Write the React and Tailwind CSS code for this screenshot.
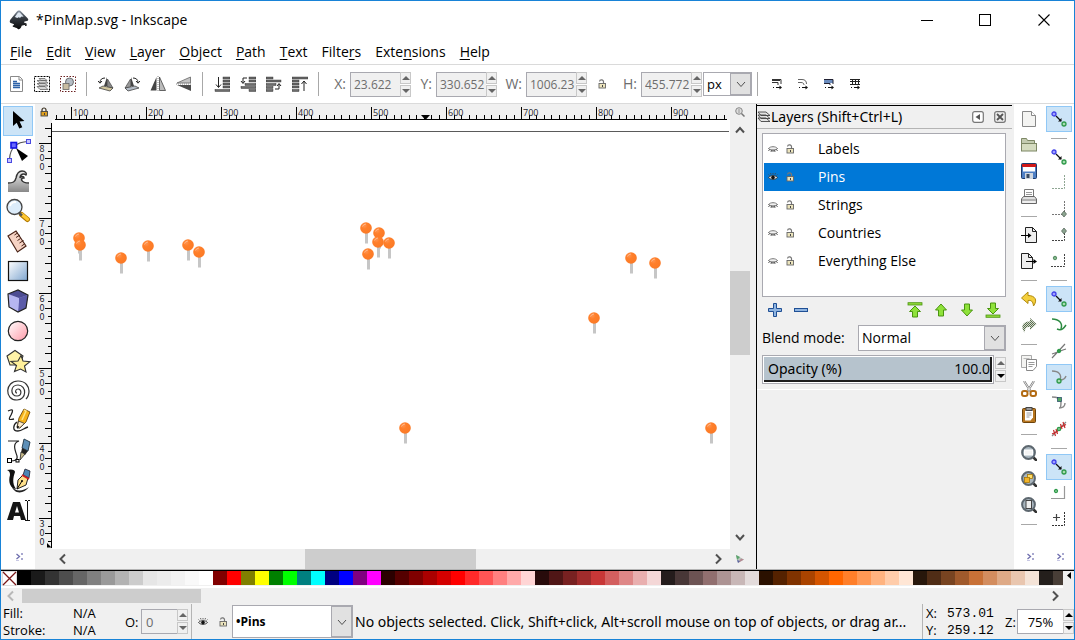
import React from "react";

/* ---------- data ---------- */

const MENUS = ["File", "Edit", "View", "Layer", "Object", "Path", "Text", "Filters", "Extensions", "Help"];
const MENU_KEYS = { Filters: 5, Extensions: 4 };

const LAYERS = [
  { name: "Labels", visible: false },
  { name: "Pins", visible: true, selected: true },
  { name: "Strings", visible: false },
  { name: "Countries", visible: false },
  { name: "Everything Else", visible: false },
];

const PALETTE =
  "000000 1a1a1a 333333 4d4d4d 666666 808080 999999 b3b3b3 cccccc e6e6e6 ececec f2f2f2 f9f9f9 ffffff 800000 ff0000 808000 ffff00 008000 00ff00 008080 00ffff 000080 0000ff 800080 ff00ff 2b0000 550000 800000 aa0000 d40000 ff0000 ff2a2a ff5555 ff8080 ffaaaa ffd5d5 280b0b 501616 782121 a02c2c c83737 d35f5f de8787 e9afaf f4d7d7 241c1c 483737 6c5353 916f6f ac9393 c8b7b7 e3dbdb 2b1100 552200 803300 aa4400 d45500 ff6600 ff7f2a ff9955 ffb380 ffccaa ffe6d5 28170b 502d16 784421 a05a2c c87137 d38d5f deaa87 e9c6af f4e3d7 241f1c 483e37".split(
    " "
  );

/* pin heads, relative to the canvas corner */
const PINS = [
  [27, 118], [28, 125], [69, 138], [96, 126], [136, 125], [147, 132], [314, 108], [327, 113],
  [326, 122], [337, 123], [316, 134], [579, 138], [603, 143], [542, 198], [353, 308], [659, 308],
];

/* ---------- icons ---------- */

function Svg({ s = 16, children, ...rest }) {
  return (
    <svg width={s} height={s} viewBox={`0 0 ${s} ${s}`} fill="none" className="block shrink-0" aria-hidden="true" {...rest}>
      {children}
    </svg>
  );
}

const LogoIcon = () => (
  <Svg s={20}>
    <defs>
      <linearGradient id="lg" x1="0" y1="0" x2="0" y2="1">
        <stop offset="0" stopColor="#8f9aa8" />
        <stop offset=".35" stopColor="#3a4048" />
        <stop offset="1" stopColor="#0a0a0a" />
      </linearGradient>
    </defs>
    <path d="M10 .5c1 0 1.600.5 2.300 1.200l6.300 6.600c1.200 1.300.8 2.400-.8 2.800-1.500.4-2.800.5-2.800 1.200 0 .8 2.900.7 2.900 1.700 0 1.100-3.400 1-4.900 1.600-1 .5-.2 1.400-1.200 2.200-.6.5-1.200 1.400-2 1.400-.9 0-1.300-.8-2.100-1.300-1.100-.6-3.200-.6-4-1.500-.7-.9 1.500-1 1.400-1.900-.1-1-3.500-.9-4.200-2.300-.5-1.300.3-2.400 1.200-3.500L7.700 1.700C8.400 1 9 .5 10 .5z" fill="url(#lg)" />
    <path d="M10 2.200c.6 0 .9.3 1.300.7l3.200 3.500c-.8.700-1.500-.1-2.200.3-.8.5-1.200 1.600-2 .9-.7-.6-1.200-.1-1.900.3-.8.3-1.500-.9-2.600-.8L8.700 2.900c.4-.4.7-.7 1.300-.7z" fill="#dfe8f2" />
    <circle cx="16.800" cy="15.200" r=".9" fill="#222" />
  </Svg>
);

const SelectorIcon = () => (
  <Svg s={26}><path d="M8 3v15l3.700-3.300 2.600 5.800 3-1.300-2.700-5.700 4.800-.4z" fill="#000" /></Svg>
);
const NodeIcon = () => (
  <Svg s={26}>
    <path d="M4.500 21C5 13 8 4 23 3.500" stroke="#555" strokeWidth="1.200" />
    <path d="M11 10l12 8-6 5z" fill="#000" />
    <rect x="6" y="4.500" width="5.500" height="5.500" fill="#6a6aff" stroke="#1414e0" strokeWidth="1.600" />
    <rect x="21.500" y="1.500" width="4" height="4" fill="#c5c5ff" stroke="#4a4ae0" />
    <rect x="2.500" y="20.500" width="4" height="4" fill="#c5c5ff" stroke="#4a4ae0" />
  </Svg>
);
const TweakIcon = () => (
  <Svg s={26}>
    <defs><linearGradient id="tw" x1="0" y1="0" x2="0" y2="1"><stop offset="0" stopColor="#eee" /><stop offset="1" stopColor="#888" /></linearGradient></defs>
    <path d="M3 24v-9c5 0 7-1 8-5 1-5 3-7 6-7 3 0 4 2 4 3-2-1-5 0-5 3 1-1 4-1 4 1-3 0-4 5 4 5.500V24z" fill="url(#tw)" />
    <path d="M3 15c5 0 7-1 8-5 1-5 3-7 6-7 4 0 5 3 4 4-2-2-6-1-6 3 1-2 4-2 4 0-4-.5-4 5 5 5" stroke="#333" strokeWidth="1.400" />
  </Svg>
);
const ZoomToolIcon = () => (
  <Svg s={26}>
    <path d="M16.500 16.500l6 5" stroke="#b07800" strokeWidth="5" strokeLinecap="round" />
    <path d="M17 16.500l5.500 4.700" stroke="#ffc832" strokeWidth="3.400" strokeLinecap="round" />
    <path d="M14 15l3 2.500" stroke="#555" strokeWidth="2.600" />
    <circle cx="9.500" cy="9" r="7.500" fill="#dcecfa" stroke="#444" strokeWidth="1.300" />
    <path d="M5 8a5.500 5.500 0 016-4" stroke="#fff" strokeWidth="2" />
  </Svg>
);
const MeasureIcon = () => (
  <Svg s={26}>
    <path d="M3 8l8-5 10 15-8.500 6z" fill="#f6d3c4" stroke="#4a2418" strokeWidth="1.200" />
    <path d="M9.500 7l3-2M11 9.500l4-2.500M12.500 12.500l3-2M14.500 15l4-2.500M16.500 18l3-2" stroke="#4a2418" strokeWidth="1" />
  </Svg>
);
const RectIcon = () => (
  <Svg s={26}>
    <defs><linearGradient id="rc" x1="0" y1="0" x2="1" y2="1"><stop offset="0" stopColor="#fff" /><stop offset="1" stopColor="#7fa6d0" /></linearGradient></defs>
    <rect x="3.500" y="3.500" width="19" height="19" fill="url(#rc)" stroke="#111" strokeWidth="1.200" />
  </Svg>
);
const CubeIcon = () => (
  <Svg s={26}>
    <path d="M3 6l10-4 10 5-2 13-8 4-9-5z" fill="#a9a9e6" />
    <path d="M3 6l10-4 1 13-10 4z" fill="#d7d7f8" />
    <path d="M14 10l9-3-2 13-8 4z" fill="#5b5ba8" />
    <path d="M3 6l11 4-1 14-9-5z" fill="#b6b6f0" />
    <path d="M3 6l10-4 10 5-9 3z" fill="#4c4c92" />
    <path d="M3 6l10-4 10 5-2 13-8 4-9-5z" stroke="#222" strokeWidth="1.200" />
  </Svg>
);
const CircleIcon = () => (
  <Svg s={26}>
    <defs><linearGradient id="cc" x1="0" y1="0" x2="1" y2="1"><stop offset="0" stopColor="#fff" /><stop offset="1" stopColor="#ff9aa8" /></linearGradient></defs>
    <circle cx="13" cy="13" r="9.700" fill="url(#cc)" stroke="#222" strokeWidth="1.200" />
  </Svg>
);
const StarIcon = () => (
  <Svg s={26}>
    <path d="M2 8l8-5.500 8 5.500-3 9H5z" fill="#fff3a8" stroke="#333" strokeWidth="1.100" />
    <path d="M16 7.500l2 5.500 7 .7-5.500 4.300 1.500 6-5.500-3-6 2.500 2-6L6 13.500l7-.5z" fill="#fff09a" stroke="#333" strokeWidth="1.100" />
  </Svg>
);
const SpiralIcon = () => (
  <Svg s={26}>
    <path d="M12 15c-2 0-2-4 1-4 4 0 4 7-1 7-7 0-7-11 1-11 9 0 9 15-1 15C-1 22 0 3 13 3c8 0 11 6 11 10 0 4-1 6-3 8" stroke="#333" strokeWidth="1.200" />
  </Svg>
);
const PencilIcon = () => (
  <Svg s={26}>
    <path d="M3 3c6-3 5 0 3 4-3 5-2 5 3 4M12 14c-4 3-5 9 1 9 4 0 6-3 10-4" stroke="#222" strokeWidth="1.300" />
    <path d="M12 19l2-9L19 1l6 3-4 10-6 6z" fill="#f6b21a" stroke="#5a3a00" strokeWidth=".8" />
    <path d="M12 20l1.500-7 6 2.500-5 4.500z" fill="#fdebc8" stroke="#333" strokeWidth=".8" />
    <path d="M12 20.500l.5-3 2 1.500z" fill="#000" />
    <path d="M19 2l2 1-4 9" stroke="#ffe480" strokeWidth="1.500" />
  </Svg>
);
const PenIcon = () => (
  <Svg s={26}>
    <path d="M3 3h11C7 5 10 12 12 18c1 4-2 5-7 5" stroke="#222" strokeWidth="1.200" />
    <path d="M19 1l6 3-2 9-6-3z" fill="#5c8fb8" stroke="#1d3344" strokeWidth=".9" />
    <path d="M17 10l6 3-3 4-4-2z" fill="#222" />
    <path d="M16 14l4 2-5 6z" fill="#c9bc8a" stroke="#222" strokeWidth=".8" />
    <rect x="2.500" y="20.500" width="4" height="4" fill="#fff" stroke="#000" />
    <rect x="11" y="21.500" width="3" height="2.500" fill="#fff" stroke="#000" />
  </Svg>
);
const CalligraphyIcon = () => (
  <Svg s={26}>
    <path d="M2 2c5-1.500 8 0 8 2-2 6-3 11 1 17-6-1-8-7-6-14 0-3-1-4-3-5z" fill="#111" />
    <path d="M6 17c4 7 11 7 18 2-5 7-15 8-18-2z" fill="#222" />
    <path d="M12 21l1-9 5-5 5 3-2 7z" fill="#ffe08a" stroke="#222" strokeWidth="1" />
    <path d="M18 7l2-6 5 2-1 7z" fill="#4c86b5" stroke="#223" strokeWidth=".8" />
    <path d="M17 7l7 4" stroke="#c22" strokeWidth="2" />
    <path d="M12 21l5-8" stroke="#000" />
    <circle cx="17" cy="13" r="1" fill="#000" />
  </Svg>
);
const TextIcon = () => (
  <Svg s={26}>
    <path d="M2 22L8 4h7l6 18h-5l-1-4H9l-1 4zM10 14.500h4L12 8z" fill="#161616" fillRule="evenodd" />
    <path d="M20 2.500h2m1 0h2M22.500 3v19M20 22.500h5" stroke="#111" />
  </Svg>
);

const TOOLS = [
  ["Select", SelectorIcon], ["Edit nodes", NodeIcon], ["Tweak", TweakIcon], ["Zoom", ZoomToolIcon], ["Measure", MeasureIcon],
  ["Rectangle", RectIcon], ["3D box", CubeIcon], ["Ellipse", CircleIcon], ["Star", StarIcon], ["Spiral", SpiralIcon],
  ["Pencil", PencilIcon], ["Bezier", PenIcon], ["Calligraphy", CalligraphyIcon], ["Text tool", TextIcon],
];

const Chevrons = () => (
  <Svg s={10}>
    <path d="M1.500 2l3 2.500L1.500 7" stroke="#6f6fae" strokeWidth="1.300" />
    <path d="M6 2h2M6 7h2" stroke="#8c8cc0" strokeWidth="1.500" />
    <path d="M1 8.500h3" stroke="#c8c8e4" />
  </Svg>
);

/* top toolbar icons */
const SelectAllIcon = () => (
  <Svg><path d="M2.500.5h9l3 3v12h-12z" fill="#fff" stroke="#8a8a8a" /><path d="M11 1v3h3" stroke="#8a8a8a" /><path d="M5 5.500h4M5 7.500h7M5 9.500h7M5 11.500h7" stroke="#2d62a8" strokeWidth="1.300" /></Svg>
);
const SelectLayersIcon = () => (
  <Svg>
    <rect x=".5" y=".5" width="15" height="15" stroke="#000" strokeDasharray="2 1" />
    <path d="M3 10.500h8l3 3H6zM3 7.500h8l3 2.500H6zM3 4.500h8l3 2.500H6zM5 2.500h6l2 2H7z" fill="#d4d4d4" stroke="#666" strokeWidth=".8" />
  </Svg>
);
const DeselectIcon = () => (
  <Svg><rect x=".5" y=".5" width="15" height="15" stroke="#6b2020" strokeDasharray="1.500 1.500" /><circle cx="9.500" cy="6" r="4" fill="#b5bcc4" stroke="#555" strokeWidth=".8" /><rect x="3" y="7.500" width="6" height="6" fill="#c9bda2" stroke="#666" strokeWidth=".8" /></Svg>
);
const RotLeft = () => (
  <Svg>
    <path d="M9 1v9H6z" fill="#444" /><path d="M9.500 3l5.500 9H9.500z" fill="#888" stroke="#333" strokeWidth=".6" />
    <path d="M1 12l4-2 10 2-3 3z" fill="#cfc49c" stroke="#444" strokeWidth=".8" /><path d="M7 2C4 2 2 3.500 2 6.500M0 5l2 2.200L4 5" stroke="#222" />
  </Svg>
);
const RotRight = () => (
  <Svg>
    <path d="M7 1v9h3z" fill="#444" /><path d="M6.500 3L1 12h5.500z" fill="#999" stroke="#333" strokeWidth=".6" />
    <path d="M15 12l-4-2-10 2 3 3z" fill="#b4bcc6" stroke="#444" strokeWidth=".8" /><path d="M9 2c3 0 5 1.500 5 4.500M12 5l2 2.200L16 5" stroke="#222" />
  </Svg>
);
const FlipH = () => (
  <Svg><path d="M6.500 1v13.500H.5z" fill="#444" /><path d="M9.500 1v13.500h6z" fill="#bbb" stroke="#444" strokeWidth=".8" /><path d="M8 0v16" stroke="#888" strokeDasharray="1 1" /></Svg>
);
const FlipV = () => (
  <Svg><path d="M14.500 1v6H1z" fill="#c4c4c4" stroke="#666" strokeWidth=".8" /><path d="M1 9h14v6z" fill="#4c4c4c" /><path d="M0 8h16" stroke="#888" strokeDasharray="1 1" /></Svg>
);
const Bars = ({ pts }) => pts.map(([x, y, w]) => <rect key={y + "-" + x} x={x} y={y} width={w} height="2" fill="#6c6c6c" stroke="#222" strokeWidth=".4" />);
const LowerBottom = () => (
  <Svg><Bars pts={[[9, 1, 7], [9, 4, 7], [9, 7, 7], [9, 10, 7], [1, 13.500, 15]]} /><path d="M4.500 1v10M2 8.500l2.500 3L7 8.500" stroke="#222" /></Svg>
);
const Lower = () => (
  <Svg><Bars pts={[[9, 1, 7], [9, 4, 7], [5, 7.500, 11], [1, 10.500, 15], [9, 13.500, 7]]} /><path d="M7 2H3v5M1 5l2 2.500L5 5" stroke="#222" /></Svg>
);
const Raise = () => (
  <Svg><Bars pts={[[0, 1, 7], [0, 4, 15], [0, 7.500, 10], [0, 10.500, 7], [0, 13.500, 7]]} /><path d="M9 13h4V8M11 10l2-2.500L15 10" stroke="#222" /></Svg>
);
const RaiseTop = () => (
  <Svg><Bars pts={[[0, 1, 16], [0, 4, 7], [0, 7, 7], [0, 10, 7], [0, 13.500, 7]]} /><path d="M12 15V5M9.500 8L12 5l2.500 3" stroke="#222" /></Svg>
);

const AffectIcon = ({ kind }) => (
  <Svg s={12}>
    {kind === 0 && <path d="M1 1.500h9V6M1 4.500h6V7M1 2.500h8" stroke="#333" />}
    {kind === 1 && <path d="M1 1.500h4c3 0 4.500 1.500 4.500 4.500M1 4.500h3c2 0 3 1 3 2.500" stroke="#666" />}
    {kind === 2 && <><rect x="1" y="1" width="9" height="4" fill="#6b8cbd" /><path d="M1 1.500h9V6M1 5.500h6V7" stroke="#223" /></>}
    {kind === 3 && <><path d="M1 1.500h10M1 3.500h10M1 6.500h10" stroke="#222" /><path d="M3.500 1v6M6.500 1v6M9.500 1v6" stroke="#222" /></>}
    <path d="M2 9.500h1M5 9.500h4" stroke="#111" /><path d="M8.500 7.500l2.500 2-2.500 2z" fill="#111" />
  </Svg>
);

const LockIcon = ({ closed }) => (
  <Svg s={10}>
    <path d={closed ? "M3 4.500V3a2 2 0 014 0v1.500" : "M2.500 2.500a2 1.800 0 014 .5v2"} stroke={closed ? "#3a3020" : "#777"} strokeWidth="1.200" />
    <rect x="2" y="4.500" width="6.500" height="4.500" fill={closed ? "#e0a020" : "#ece4bc"} stroke={closed ? "#444" : "#666"} strokeWidth=".9" />
    <path d="M5.500 6v2" stroke="#444" />
  </Svg>
);
const EyeIcon = ({ open }) => (
  <Svg s={12}>
    {open ? (
      <><path d="M1.500 6.500C3.500 4 8.500 4 10.500 6.500 8.500 9 3.500 9 1.500 6.500z" fill="#ddd" stroke="#333" strokeWidth=".9" /><circle cx="6" cy="6.500" r="1.800" fill="#111" /><path d="M2.500 4.500l-1-1M4 3.500L3.500 2M6 3.500V2M8 3.500L8.500 2M9.500 4.500l1-1" stroke="#444" strokeWidth=".8" /></>
    ) : (
      <><path d="M1.500 5.500C3.500 3 8.500 3 10.500 5.500" fill="#e4e4e4" stroke="#777" strokeWidth=".9" /><path d="M1.500 5.500c2 2 7 2 9 0M2.500 6.500l-1 1.500M4.500 7l-.5 2M6 7v2M7.500 7l.5 2M9.500 6.500l1 1.500" stroke="#333" strokeWidth=".8" /></>
    )}
  </Svg>
);

/* right-hand command icons */
const NewIcon = () => <Svg><path d="M1.500.5h9l4 4v11h-13z" fill="#f4f4f2" stroke="#888" /><path d="M10.500.5v4h4" stroke="#888" fill="#fff" /></Svg>;
const OpenIcon = () => <Svg><path d="M.5 13.500v-12h5l1 2h7v3" fill="#c3cbb0" stroke="#7d8765" /><rect x=".5" y="6.500" width="15" height="7.500" fill="#d5dcc0" stroke="#7d8765" /></Svg>;
const SaveIcon = () => (
  <Svg><rect x=".5" y=".5" width="15" height="15" rx="1" fill="#4f7fc4" stroke="#1d3b6c" /><rect x="2" y="1" width="12" height="7.500" fill="#fff" /><rect x="1" y="1" width="14" height="3" fill="#d01818" /><rect x="4" y="10" width="8" height="6" fill="#cfd6df" /><rect x="5.500" y="11" width="3" height="4" fill="#3a4a60" /></Svg>
);
const PrintIcon = () => (
  <Svg><path d="M3.500 8V.5h9V8" fill="#fff" stroke="#777" /><path d="M5 3.500h6M5 5.500h6" stroke="#999" /><path d="M.5 14.500V10l2-2.500h11l2 2.500v4.500z" fill="#e0e0e0" stroke="#666" /><path d="M1 11h14" stroke="#888" /><path d="M2 13h12" stroke="#fff" /></Svg>
);
const ImportIcon = () => <Svg><path d="M4.500.5h7l4 4v11h-11z" fill="#eee" stroke="#222" /><path d="M11.500.5v4h4" stroke="#222" /><path d="M0 8.500h9" stroke="#000" /><path d="M7 6l3.500 2.500L7 11z" fill="#000" /></Svg>;
const ExportIcon = () => <Svg><path d="M.5.5h7l4 4v11H.5z" fill="#eee" stroke="#222" /><path d="M7.500.5v4h4" stroke="#222" /><path d="M5 8.500h9" stroke="#000" /><path d="M12.500 6L16 8.500 12.500 11z" fill="#000" /></Svg>;
const UndoIcon = () => <Svg><path d="M7 1L.5 7 7 12.500V9.500c3-.5 5 .5 5.500 5.500C17 9 14 4.500 7 4.500z" fill="#f4cf3c" stroke="#b08a10" /></Svg>;
const RedoIcon = () => (
  <Svg>
    <defs><pattern id="dth" width="2" height="2" patternUnits="userSpaceOnUse"><rect width="2" height="2" fill="#d3dccb" /><rect width="1" height="1" fill="#5a6b50" /><rect x="1" y="1" width="1" height="1" fill="#5a6b50" /></pattern></defs>
    <path d="M9 1l6.500 6L9 13v-3c-3-.5-5 .5-5.500 5.500C-1 9 2 4.500 9 4.500z" fill="url(#dth)" />
  </Svg>
);
const CopyIcon = () => <Svg><path d="M.5.5h10v12H.5z" fill="#f4f4f2" stroke="#aaa" /><path d="M2.500 3.500h6" stroke="#bbb" /><path d="M5.500 4.500h10v7l-3.500 4H5.500z" fill="#fff" stroke="#888" /><path d="M7.500 7.500h6M7.500 9.500h6M7.500 11.500h4" stroke="#999" /></Svg>;
const CutIcon = () => (
  <Svg><path d="M3 0l7 11M13 0L6 11" stroke="#777" strokeWidth="2.200" /><path d="M3 0l7 11M13 0L6 11" stroke="#e8e8e8" strokeWidth="1" /><rect x="1" y="10" width="5.500" height="5" rx="2" stroke="#b26b14" strokeWidth="2" /><rect x="9.500" y="10" width="5.500" height="5" rx="2" stroke="#b26b14" strokeWidth="2" /></Svg>
);
const PasteIcon = () => <Svg><rect x="1.500" y="1.500" width="13" height="14" rx="1" fill="#b8761e" stroke="#6c430c" /><path d="M4 3.500h8v7L9.500 13.500H4z" fill="#fff" /><rect x="5" y=".5" width="6" height="3" fill="#999" stroke="#444" /><path d="M5.500 6h5M5.500 8h5M5.500 10h3" stroke="#999" /></Svg>;
const LensIcon = ({ kind }) => (
  <Svg>
    <path d="M12 12l3 3" stroke="#333" strokeWidth="2.500" strokeLinecap="round" />
    <circle cx="7.500" cy="7.500" r="6.400" fill="#a9b6bf" stroke="#5d676f" strokeWidth="2" />
    {kind === 0 && <rect x="3.500" y="5" width="8" height="5" fill="#f4f4f4" stroke="#fff" />}
    {kind === 1 && <><rect x="6.500" y="3.500" width="5" height="4" fill="#ffdf6a" stroke="#a87808" strokeWidth=".8" /><rect x="3.500" y="6.500" width="5" height="5" fill="#f2b42a" stroke="#a87808" strokeWidth=".8" /></>}
    {kind === 2 && <rect x="5" y="3.500" width="5.500" height="8" fill="#eee" stroke="#444" />}
  </Svg>
);

/* snap icons */
const Dot = ({ x, y, c = "#2f9a4a", f = "#a8dcb0", r = 2 }) => <circle cx={x} cy={y} r={r} fill={f} stroke={c} strokeWidth="1.300" />;
const SnapIcon = () => <Svg><path d="M5 5l5 5" stroke="#111" strokeWidth="1.200" /><path d="M10.500 7v3.500H7z" fill="#111" /><Dot x={3} y={3} c="#4040e8" f="#a0a0ff" /><Dot x={13} y={13} /></Svg>;
const SnapBox = () => <Svg><path d="M13.500 0v13.500H0" stroke="#8fa693" strokeDasharray="2 1" /></Svg>;
const Diamond = ({ x, y }) => <path d={`M${x - 2.500} ${y}l2.500-3 2.500 3-2.500 3z`} fill="#8ca590" stroke="#4c5c50" strokeWidth=".7" />;
const SnapCorner = () => <Svg><path d="M13.500 0v13.500H0" stroke="#777" strokeDasharray="2 1" /><Diamond x={13} y={13} /></Svg>;
const SnapEdge = () => <Svg><path d="M13.500 6v7.500H1" stroke="#444" strokeDasharray="2 1" /><Diamond x={13} y={4} /></Svg>;
const SnapCenter = () => <Svg><path d="M13.500 1v12.500H0" stroke="#444" strokeDasharray="2 1" /><Dot x={4} y={5} c="#5b8f65" r={1.500} /></Svg>;
const SnapPath = () => <Svg><path d="M1 2c7 0 11 4 9 10" stroke="#2c8a42" strokeWidth="1.500" /><path d="M6 12c5 2 7-1 9-4" stroke="#2c8a42" strokeWidth="1.500" /></Svg>;
const SnapCross = () => <Svg><path d="M1 15L14 1M1 11c4-1 8-3 14-5" stroke="#777" strokeWidth="1.200" /><Dot x={8} y={8} f="#3a9a4c" r={1.500} /></Svg>;
const SnapCusp = () => <Svg><path d="M1 2c7 0 10 4 8 9 3 0 5-1 6-4" stroke="#888" strokeWidth="1.400" /><Dot x={8} y={12} /></Svg>;
const SnapSmooth = () => <Svg><path d="M1 2c4 0 8 1 9 4 0 4 0 6-1 7M8 13c4 0 6-2 6-5" stroke="#888" strokeWidth="1.400" /><rect x="6.500" y="2.500" width="4" height="4" fill="#52a862" stroke="#246" strokeWidth=".7" /></Svg>;
const SnapMid = () => <Svg><path d="M1 15L15 1" stroke="#888" strokeWidth="1.200" /><path d="M2.500 9l2 6M5 8l1.500 5M9.500 3l1.500 5M12 1l2 6M1 13l6-3M9 6.500l6-3" stroke="#c42a2a" strokeWidth="1.200" /><Dot x={8} y={8} f="#8fcf99" r={1.600} /></Svg>;
const SnapObj = () => <Svg><path d="M13.500 1v12.500H0" stroke="#999" strokeWidth="1.200" /><Dot x={5} y={6} r={1.500} /></Svg>;
const SnapRot = () => <Svg><path d="M13.500 1v13.500H0" stroke="#333" strokeDasharray="2 1" /><path d="M5.500 3v7M2 6.500h7" stroke="#444" strokeWidth="1.200" /></Svg>;

const SEP = "sep";
const COMMANDS = [
  ["New", NewIcon], ["Open", OpenIcon], ["Save", SaveIcon], ["Print", PrintIcon], SEP,
  ["Import", ImportIcon], ["Export", ExportIcon], SEP,
  ["Undo", UndoIcon], ["Redo", RedoIcon], SEP,
  ["Copy", CopyIcon], ["Cut", CutIcon], ["Paste", PasteIcon], SEP,
  ["Zoom selection", () => <LensIcon kind={0} />], ["Zoom drawing", () => <LensIcon kind={1} />], ["Zoom page", () => <LensIcon kind={2} />], SEP,
];
const SNAPS = [
  ["Enable snapping", SnapIcon, true], SEP,
  ["Snap bounding boxes", SnapIcon], ["Snap edges", SnapBox], ["Snap corners", SnapCorner], ["Snap edge midpoints", SnapEdge], ["Snap box centers", SnapCenter], SEP,
  ["Snap nodes", SnapIcon, true], ["Snap paths", SnapPath], ["Snap intersections", SnapCross], ["Snap cusp nodes", SnapCusp, true],
  ["Snap smooth nodes", SnapSmooth], ["Snap line midpoints", SnapMid], SEP,
  ["Snap others", SnapIcon, true], ["Snap object centers", SnapObj], ["Snap rotation centers", SnapRot],
];

/* ---------- shared pieces ---------- */

const Caret = ({ d, s = 12, c = "#505050", w = 2 }) => (
  <Svg s={s}>
    <path
      d={{ up: "M2 8.500L6 4l4 4.500", down: "M2 4l4 4.500L10 4", left: "M8 1.500L3.500 6 8 10.500", right: "M4 1.500L8.500 6 4 10.500" }[d]}
      stroke={c}
      strokeWidth={w}
    />
  </Svg>
);

function IconButton({ label, className = "", children }) {
  return (
    <button type="button" aria-label={label} className={`flex shrink-0 items-center justify-center ${className}`}>
      {children}
    </button>
  );
}

function Spin({ up = "#666", down = "#666", label }) {
  const cls = "h-3 w-[11px] border border-[#c8c8c8] bg-[#f0f0f0]";
  return (
    <span className="flex shrink-0 flex-col gap-px">
      <IconButton label={`Increase ${label}`} className={cls}>
        <svg width="8" height="4" aria-hidden="true"><path d="M0 4l4-4 4 4z" fill={up} /></svg>
      </IconButton>
      <IconButton label={`Decrease ${label}`} className={cls}>
        <svg width="8" height="4" aria-hidden="true"><path d="M0 0l4 4 4-4z" fill={down} /></svg>
      </IconButton>
    </span>
  );
}

function Coord({ label, value, wide }) {
  return (
    <span className="flex shrink-0 items-center text-[#6d6d6d]">
      <label htmlFor={`f-${label}`} className={wide ? "w-5 text-right" : "w-4 text-right"}>{label}:</label>
      <input
        id={`f-${label}`}
        disabled
        defaultValue={value}
        className="ml-1 h-[25px] w-[50px] border border-r-0 border-[#a9a9b0] bg-[#f0f0f0] pl-[3px] text-xs"
      />
      <Spin label={label} />
    </span>
  );
}

function Select({ label, id, options, className = "", textClass = "" }) {
  return (
    <span className={`grid border border-[#a9a9b0] bg-white ${className}`}>
      <select id={id} aria-label={label} className={`col-start-1 row-start-1 min-w-0 appearance-none bg-transparent pr-5 pl-[3px] ${textClass}`}>
        {options.map((o) => <option key={o}>{o}</option>)}
      </select>
      <span className="pointer-events-none col-start-1 row-start-1 flex w-[21px] items-center justify-center justify-self-end border border-[#a9a9b0] bg-[#e1e1e1]">
        <Caret d="down" w={1} />
      </span>
    </span>
  );
}

const VSep = () => <span className="h-6 w-px shrink-0 bg-[#a8a8a8]" />;

/* ---------- rulers ---------- */

function HRuler() {
  const ticks = [];
  for (let i = -2; i <= 87; i++) {
    const x = Math.round(19 + i * 7.5);
    if (x > 674) break;
    ticks.push(<path key={i} d={`M${x + 0.5} ${i % 10 === 0 ? 3 : 11}V15`} stroke="#000" />);
  }
  return (
    <svg className="h-4 min-w-0 flex-1" aria-hidden="true">
      {ticks}
      <path d="M3 15.500H675" stroke="#000" />
      {[1, 2, 3, 4, 5, 6, 7, 8, 9].map((n) => (
        <text key={n} x={21 + (n - 1) * 75} y="12" fontSize="9" fill="#1c1c2c">{n * 100}</text>
      ))}
      <path d="M369 11h9l-4.500 5z" fill="#000" />
    </svg>
  );
}

function VRuler() {
  const ticks = [];
  for (let i = -2; i <= 53; i++) {
    const y = Math.round(23 + i * 7.5);
    ticks.push(<path key={i} d={`M${i % 10 === 0 ? 4 : i % 2 === 0 ? 10 : 13} ${y + 0.5}H16`} stroke="#000" />);
  }
  return (
    <svg className="w-[17px] shrink-0 self-stretch" aria-hidden="true">
      {ticks}
      <path d="M16.500 3V428" stroke="#000" />
      {[800, 700, 600, 500, 400, 300].map((n, k) => (
        <text
          key={n}
          x="7"
          y={24 + k * 75}
          fontSize="9"
          fill="#1c1c2c"
          className="font-['Noto_Sans_CJK_JP',sans-serif] [text-orientation:upright] [writing-mode:vertical-rl]"
        >
          {n}
        </text>
      ))}
      <path d="M12 423l4.500 4.500H12z" fill="#000" />
    </svg>
  );
}

/* ---------- sections ---------- */

function TitleBar() {
  return (
    <header className="flex h-[38px] shrink-0 items-center bg-white pl-2">
      <LogoIcon />
      <h1 className="ml-[7px] flex-1 text-sm">*PinMap.svg - Inkscape</h1>
      <IconButton label="Minimize" className="h-full w-[58px]"><Svg s={12}><path d="M0 6.500h12" stroke="#000" /></Svg></IconButton>
      <IconButton label="Maximize" className="h-full w-[58px]"><Svg s={12}><rect x=".5" y=".5" width="11" height="11" stroke="#000" /></Svg></IconButton>
      <IconButton label="Close" className="h-full w-[60px]"><Svg s={12}><path d="M.5.5l11 11M11.500.5l-11 11" stroke="#000" strokeWidth="1.100" /></Svg></IconButton>
    </header>
  );
}

function MenuBar() {
  return (
    <nav className="flex h-[26px] shrink-0 items-center gap-[14px] border-b border-[#dadada] bg-white pl-[9px]">
      {MENUS.map((m) => {
        const k = MENU_KEYS[m] ?? 0;
        return (
          <button key={m} type="button" className="shrink-0">
            {m.slice(0, k)}<span className="underline underline-offset-2">{m[k]}</span>{m.slice(k + 1)}
          </button>
        );
      })}
    </nav>
  );
}

function ToolControls() {
  const groups = [
    [["Select all", SelectAllIcon], ["Select all in all layers", SelectLayersIcon], ["Deselect", DeselectIcon]],
    [["Rotate left", RotLeft], ["Rotate right", RotRight], ["Flip horizontal", FlipH], ["Flip vertical", FlipV]],
    [["Lower to bottom", LowerBottom], ["Lower", Lower], ["Raise", Raise], ["Raise to top", RaiseTop]],
  ];
  return (
    <div className="flex h-[39px] shrink-0 items-center border-b border-[#dadada] bg-white pl-[2px]">
      {groups.map((g, i) => (
        <div key={i} className="flex items-center">
          {g.map(([l, I]) => <IconButton key={l} label={l} className="h-[26px] w-[26px]"><I /></IconButton>)}
          <span className={i === 2 ? "flex w-[17px] pl-[5px]" : "flex w-3 pl-[5px]"}><VSep /></span>
        </div>
      ))}
      <div className="flex items-center gap-[5px]">
        <Coord label="X" value="23.622" />
        <Coord label="Y" value="330.652" />
        <Coord label="W" value="1006.23" wide />
        <IconButton label="Lock ratio" className="w-5"><LockIcon /></IconButton>
        <Coord label="H" value="455.772" wide />
      </div>
      <Select label="Unit" options={["px"]} className="ml-px h-6 w-[49px] shrink-0" textClass="text-[13px]" />
      <span className="flex w-3 shrink-0 pl-[5px]"><VSep /></span>
      {[0, 1, 2, 3].map((k) => (
        <IconButton key={k} label={`Transform option ${k + 1}`} className="h-[26px] w-[26px]"><AffectIcon kind={k} /></IconButton>
      ))}
    </div>
  );
}

function ToolBox() {
  return (
    <aside className="flex w-[34px] shrink-0 flex-col items-center bg-white pt-[2px]">
      {TOOLS.map(([l, I], i) => (
        <IconButton key={l} label={l} className={`h-[30px] w-[30px] border ${i === 0 ? "border-[#90c8f6] bg-[#cce4f7]" : "border-transparent"}`}>
          <I />
        </IconButton>
      ))}
      <IconButton label="More tools" className="mt-auto mb-[6px] h-3 w-full pl-1"><Chevrons /></IconButton>
    </aside>
  );
}

function Canvas() {
  return (
    <svg className="h-full w-full bg-white" aria-label="Canvas">
      <defs>
        <radialGradient id="ph" cx=".35" cy=".3" r=".7">
          <stop offset="0" stopColor="#ff9450" /><stop offset=".4" stopColor="#ff7f2a" /><stop offset="1" stopColor="#fb7a26" />
        </radialGradient>
      </defs>
      <path d="M0 11.500H677" stroke="#5a5a5a" />
      {PINS.map(([x, y]) => (
        <g key={`${x}-${y}`}>
          <rect x={x - 1} y={y + 5} width="3" height="10.500" fill="#c6c6c6" />
          <circle cx={x} cy={y} r="5.800" fill="url(#ph)" />
          <path d={`M${x - 3.500} ${y - 1.500}q1-2.500 3.500-2.500`} stroke="#ffb98a" strokeWidth="1" fill="none" />
        </g>
      ))}
    </svg>
  );
}

function Workspace() {
  return (
    <main className="flex min-w-0 flex-1 bg-[#f0f0f0]">
      <div className="flex min-w-0 flex-1 flex-col">
        <div className="flex h-4 shrink-0">
          <IconButton label="Lock guides" className="h-4 w-[17px] shrink-0"><LockIcon closed /></IconButton>
          <HRuler />
        </div>
        <div className="flex min-h-0 flex-1">
          <VRuler />
          <div className="min-w-0 flex-1"><Canvas /></div>
        </div>
        <div className="flex h-5 shrink-0 items-center pl-[22px]">
          <Caret d="left" />
          <div className="flex h-5 flex-1 px-[236px]"><div className="h-5 w-[171px] bg-[#cdcdcd]" /></div>
          <span className="pr-[11px]"><Caret d="right" /></span>
        </div>
      </div>
      <div className="flex w-[26px] shrink-0 flex-col items-center pr-[6px]">
        <IconButton label="Zoom with window" className="h-4"><Svg s={10}><circle cx="4" cy="4" r="3.300" fill="#ddd" stroke="#888" /><path d="M3 3h2M3 5h2" stroke="#999" /><path d="M6.500 6.500l3 3" stroke="#777" strokeWidth="1.500" /></Svg></IconButton>
        <div className="flex h-5 items-center"><Caret d="up" /></div>
        <div className="flex w-5 flex-1 flex-col pt-[131px]"><div className="h-[84px] w-full bg-[#cdcdcd]" /></div>
        <div className="flex h-6 items-center"><Caret d="down" /></div>
        <IconButton label="Color management" className="h-5">
          <Svg s={10}><path d="M1 1l8 4.500-6 3.500z" fill="#b9c5bc" /><path d="M1 1l4 2-3 3z" fill="#5ca46e" /><path d="M3 9l6-3.500-3-1z" fill="#b58a94" /><path d="M2 6l1 3 2-2z" fill="#5a64a4" /></Svg>
        </IconButton>
      </div>
    </main>
  );
}

const GreenArrow = ({ down, bar }) => (
  <Svg>
    <g transform={down ? "rotate(180 8 8)" : undefined}>
      {bar && <rect x="1" y=".7" width="14" height="2.300" fill="#8fd83a" stroke="#4a9410" strokeWidth=".8" />}
      <path d={bar ? "M8 4l5.500 5.500h-3V15h-5V9.500h-3z" : "M8 2l5.500 6h-3v6h-5V8h-3z"} fill="#8fe23a" stroke="#4a9410" />
    </g>
  </Svg>
);

function LayersDock() {
  return (
    <section className="flex w-64 shrink-0 flex-col border-l border-black bg-[#f0f0f0] pt-px">
      <div className="border-t border-black" />
      <div className="flex h-[23px] shrink-0 items-center border-b border-[#b4b4b4] pr-1">
        <Svg s={14}><path d="M1 8h8l4 3.500H4zM1 5h8l4 3.500H4zM1 2h8l4 3.500H4z" fill="#e4e4e4" stroke="#444" strokeWidth=".9" /></Svg>
        <h2 className="flex-1 font-['Noto_Sans',sans-serif]">Layers (Shift+Ctrl+L)</h2>
        <IconButton label="Iconify" className="mr-[10px]"><Svg s={12}><rect x=".7" y=".7" width="10.600" height="10.600" rx="2" fill="#fff" stroke="#777" strokeWidth="1.200" /><path d="M8 3v6L3.500 6z" fill="#555" /></Svg></IconButton>
        <IconButton label="Close layers" className="mr-[2px]"><Svg s={12}><rect x=".7" y=".7" width="10.600" height="10.600" rx="2" fill="#eee" stroke="#777" strokeWidth="1.200" /><path d="M3 3l6 6M9 3L3 9" stroke="#555" strokeWidth="1.800" /></Svg></IconButton>
      </div>
      <div className="flex flex-col border-b border-white pr-[6px] pb-[5px] pl-[5px]">
        <ul className="mt-1 flex h-[164px] flex-col border border-[#a9a9b0] bg-white p-px">
          {LAYERS.map((l) => (
            <li key={l.name} className={`flex h-7 shrink-0 items-center ${l.selected ? "bg-[#0078d7] text-white" : ""}`}>
              <IconButton label={`Toggle visibility of ${l.name}`} className="ml-[3px]"><EyeIcon open={l.visible} /></IconButton>
              <IconButton label={`Lock ${l.name}`} className="ml-[6px]"><LockIcon /></IconButton>
              <span className="ml-[23px]">{l.name}</span>
            </li>
          ))}
        </ul>
        <div className="flex h-[25px] items-center gap-[10px] pr-[5px] pl-[5px]">
          <IconButton label="Add layer"><Svg><path d="M6.500 1.500h3v5h5v3h-5v5h-3v-5h-5v-3h5z" fill="#8fb4e0" stroke="#1f4f95" /></Svg></IconButton>
          <IconButton label="Remove layer"><Svg><rect x="1.500" y="6.500" width="13" height="3" fill="#8fb4e0" stroke="#1f4f95" /></Svg></IconButton>
          <span className="flex-1" />
          <IconButton label="Raise layer to top"><GreenArrow bar /></IconButton>
          <IconButton label="Raise layer"><GreenArrow /></IconButton>
          <IconButton label="Lower layer"><GreenArrow down /></IconButton>
          <IconButton label="Lower layer to bottom"><GreenArrow down bar /></IconButton>
        </div>
        <div className="mt-[2px] flex h-[28px] items-center">
          <label htmlFor="blend" className="w-24 shrink-0">Blend mode:</label>
          <Select id="blend" options={["Normal"]} className="h-[26px] flex-1" />
        </div>
        <div className="mt-[3px] flex items-center">
          <div className="flex h-[29px] flex-1 border border-[#a9a9b0] bg-white p-px">
            <div className="flex flex-1 items-center border-r-2 border-b-2 border-[#1c1c1c] bg-[#b6c3cd] pl-1">
              <label htmlFor="opacity" className="flex-1 font-['Noto_Sans',sans-serif]">Opacity (%)</label>
              <input id="opacity" defaultValue="100.0" className="w-12 bg-transparent text-right" />
            </div>
          </div>
          <span className="ml-px"><Spin down="#000" label="opacity" /></span>
        </div>
      </div>
    </section>
  );
}

function IconColumn({ items, more }) {
  return (
    <div className="flex w-[30px] shrink-0 flex-col items-center bg-white pt-[2px]">
      {items.map((it, i) =>
        it === SEP ? (
          <span key={i} className="flex h-3 w-4 shrink-0 items-center"><span className="h-px w-full bg-[#a8a8a8]" /></span>
        ) : (
          <IconButton key={it[0]} label={it[0]} className={`h-[26px] w-[26px] border ${it[2] ? "border-[#90c8f6] bg-[#cce4f7]" : "border-transparent"}`}>
            {React.createElement(it[1])}
          </IconButton>
        )
      )}
      <IconButton label={more} className="mt-auto mb-[6px] h-3 w-full pl-1"><Chevrons /></IconButton>
    </div>
  );
}

function Palette() {
  return (
    <div className="flex h-[18px] shrink-0 border-t border-black bg-[#f0f0f0]">
      <div className="flex min-w-0 flex-1 overflow-hidden border-b-2 border-white pl-px">
        <IconButton label="No color" className="bg-white"><Svg s={15}><rect x=".5" y=".5" width="14" height="14" fill="#fff" stroke="#ddd" /><path d="M1 1l13 13M14 1L1 14" stroke="#7a1818" strokeWidth="1.300" /></Svg></IconButton>
        {PALETTE.map((c, i) => (
          <button key={i} type="button" aria-label={`#${c}`} className="h-[14px] w-[14px] shrink-0" style={{ backgroundColor: `#${c}` }} />
        ))}
      </div>
      <IconButton label="Palette menu" className="h-2 w-[11px]"><svg width="4" height="7" aria-hidden="true"><path d="M4 0v7L0 3.500z" fill="#000" /></svg></IconButton>
    </div>
  );
}

function StatusBar() {
  return (
    <footer className="flex h-[35px] shrink-0 items-center bg-[#f0f0f0] pl-[2px]">
      <dl className="grid w-[122px] shrink-0 grid-cols-[70px_1fr] text-[13px] leading-[17px]">
        <dt>Fill:</dt><dd>N/A</dd>
        <dt>Stroke:</dt><dd>N/A</dd>
      </dl>
      <label htmlFor="op" className="w-4 shrink-0 text-[13px]">O:</label>
      <input id="op" disabled defaultValue="0" className="h-[25px] w-9 shrink-0 border border-r-0 border-[#a9a9b0] bg-[#f0f0f0] pl-1 text-[13px] text-[#6d6d6d]" />
      <Spin label="object opacity" />
      <span className="ml-[3px] h-full w-px shrink-0 bg-[#b4b4b4]" />
      <IconButton label="Toggle current layer visibility" className="ml-[5px]"><EyeIcon open /></IconButton>
      <IconButton label="Lock current layer" className="ml-[9px]"><LockIcon /></IconButton>
      <Select label="Current layer" options={["•Pins"]} className="ml-1 h-[33px] w-[121px] shrink-0" textClass="text-xs font-bold" />
      <p className="ml-[2px] min-w-0 flex-1 overflow-hidden font-['Noto_Sans',sans-serif] whitespace-nowrap">
        No objects selected. Click, Shift+click, Alt+scroll mouse on top of objects, or drag ar...
      </p>
      <span className="h-full w-px shrink-0 bg-[#b4b4b4]" />
      <dl className="ml-[3px] grid w-[79px] shrink-0 grid-cols-[21px_1fr] text-[13px] leading-[17px]">
        <dt>X:</dt><dd className="font-['Liberation_Mono',monospace]">573.01</dd>
        <dt>Y:</dt><dd className="font-['Liberation_Mono',monospace]">259.12</dd>
      </dl>
      <label htmlFor="zoom" className="w-3 shrink-0 text-[13px]">Z:</label>
      <input id="zoom" defaultValue="75%" className="h-[25px] w-[46px] shrink-0 border border-r-0 border-[#a9a9b0] bg-white text-center text-[13px]" />
      <Spin up="#000" down="#000" label="zoom" />
    </footer>
  );
}

export default function App() {
  return (
    <div className="flex h-screen flex-col overflow-hidden border border-[#1883d7] bg-[#f0f0f0] font-['Open_Sans','Noto_Sans',sans-serif] text-sm leading-5 text-black">
      <TitleBar />
      <MenuBar />
      <ToolControls />
      <div className="flex min-h-0 flex-1 border-b border-[#b4b4b4]">
        <ToolBox />
        <Workspace />
        <LayersDock />
        <div className="ml-[2px] flex shrink-0">
          <IconColumn items={COMMANDS} more="More commands" />
          <IconColumn items={SNAPS} more="More snapping" />
        </div>
      </div>
      <Palette />
      <div className="flex h-4 shrink-0 items-center bg-[#f0f0f0] pl-1">
        <Caret d="left" c="#b8b8b8" />
        <div className="flex h-[14px] flex-1 pl-[5px]"><div className="w-[179px] bg-[#cdcdcd]" /></div>
        <span className="pr-[13px]"><Caret d="right" /></span>
      </div>
      <StatusBar />
    </div>
  );
}
